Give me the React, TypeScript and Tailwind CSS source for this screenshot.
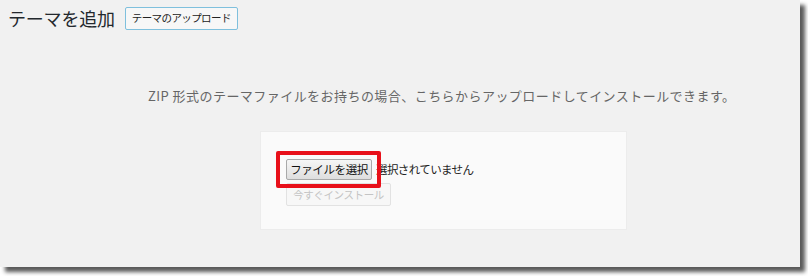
export default function App() {
  return (
    <div className="w-[808px] h-[276px] bg-white">
      <div
        className="relative w-[800px] h-[267px] bg-[#f1f1f1] text-[#444] shadow-[5px_5px_4px_rgba(0,0,0,0.65)]"
        style={{ fontFamily: '"Noto Sans CJK JP", "Liberation Sans", sans-serif' }}
      >
        {/* Header */}
        <div className="flex items-center gap-[10px] pl-[8px] pt-[6px]">
          <h1 className="text-[18px] leading-[24px] text-[#23282d] tracking-[-0.2px]">テーマを追加</h1>
          <button className="h-[23px] px-[6px] border border-[#7fc0dd] rounded-[2px] bg-[#f7f7f7] text-[10.5px] text-[#222] leading-none tracking-[-0.6px]">
            テーマのアップロード
          </button>
        </div>

        {/* Description */}
        <p className="ml-[148px] mt-[57px] text-[13px] leading-[18px] text-[#666] tracking-[0.45px]">
          ZIP 形式のテーマファイルをお持ちの場合、こちらからアップロードしてインストールできます。
        </p>

        {/* Upload box */}
        <div className="ml-[260px] mt-[26px] w-[367px] h-[99px] bg-[#fafafa] border border-[#ececec] pl-[25px] pt-[27px]">
          <div className="flex items-center gap-[4px]">
            <span className="h-[21px] w-[86px] flex items-center justify-center border border-[#a9a9a9] rounded-[2px] bg-gradient-to-b from-[#f6f6f6] to-[#dedede] text-[11.5px] text-[#111] tracking-[-0.4px]">
              ファイルを選択
            </span>
            <span className="text-[11.5px] text-[#222] tracking-[-0.6px]">選択されていません</span>
          </div>
          <button className="mt-[2px] h-[23px] w-[105px] border border-[#e2e2e2] rounded-[2px] bg-[#f7f7f7] text-[10.5px] text-[#c4c4c4] tracking-[-0.4px]">
            今すぐインストール
          </button>
        </div>

        {/* Annotation */}
        <div className="absolute left-[276px] top-[151px] w-[105px] h-[37px] border-[4px] border-[#e8101a] rounded-[2px]" />
      </div>
    </div>
  );
}
